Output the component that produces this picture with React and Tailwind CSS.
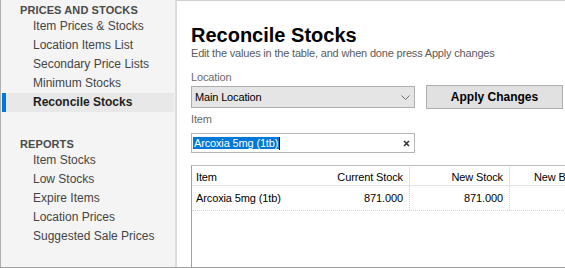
import React from "react";

const priceItems = [
  "Item Prices & Stocks",
  "Location Items List",
  "Secondary Price Lists",
  "Minimum Stocks",
  "Reconcile Stocks",
];
const reportItems = [
  "Item Stocks",
  "Low Stocks",
  "Expire Items",
  "Location Prices",
  "Suggested Sale Prices",
];

function NavItem({ label, active }) {
  return (
    <div
      className={
        "relative mx-[1px] h-[19px] leading-[19px] pl-[31px] whitespace-nowrap " +
        (active ? "bg-[#e8e8e8] font-bold text-[#1e1e1e]" : "text-[#444]")
      }
    >
      {active && <span className="absolute left-0 top-0 h-full w-[4px] bg-[#0078d7]" />}
      {label}
    </div>
  );
}

export default function App() {
  return (
    <div className="flex w-[565px] h-[268px] overflow-hidden border-b border-[#a0a0a0] font-['Liberation_Sans',Arial,sans-serif] bg-white">
      <aside className="w-[177px] shrink-0 bg-[#f4f4f4] border-l border-l-[#b0b0b0] border-r-2 border-r-[#dcdcdc] pt-[4px] text-[12px]">
        <div className="pl-[19px] h-[13px] leading-[13px] font-bold text-[11px] tracking-[0.1px] text-[#4a4a4a] whitespace-nowrap">
          PRICES AND STOCKS
        </div>
        {priceItems.map((l) => (
          <NavItem key={l} label={l} active={l === "Reconcile Stocks"} />
        ))}
        <div className="mt-[26px] pl-[19px] h-[13px] leading-[13px] font-bold text-[11px] tracking-[0.1px] text-[#4a4a4a]">
          REPORTS
        </div>
        {reportItems.map((l) => (
          <NavItem key={l} label={l} />
        ))}
      </aside>

      <main className="flex-1 min-w-0 flex flex-col bg-white border-t border-[#d0d0d0] pl-[14px] pt-[25px] overflow-hidden">
        <h1 className="text-[20px] leading-[18px] font-bold text-black whitespace-nowrap">Reconcile Stocks</h1>
        <p className="mt-[3px] text-[11px] leading-[13px] tracking-[-0.18px] text-[#5a5a5a] whitespace-nowrap">
          Edit the values in the table, and when done press Apply changes
        </p>

        <div className="mt-[11px] text-[11px] leading-[13px] tracking-[-0.15px] text-[#6a6a6a]">Location</div>
        <div className="mt-[1px] flex items-center h-[24px]">
          <div className="w-[224px] h-[22px] shrink-0 flex items-center justify-between border border-[#adadad] bg-[#e5e5e5] pl-[3px] pr-[4px] text-[11px] tracking-[-0.15px] text-black">
            <span>Main Location</span>
            <svg width="9" height="5" viewBox="0 0 9 5" className="mt-[1px]">
              <path d="M0.5 0.5 L4.5 4.5 L8.5 0.5" fill="none" stroke="#707070" strokeWidth="1" />
            </svg>
          </div>
          <div className="ml-[11px] w-[137px] h-[24px] shrink-0 flex items-center justify-center border border-[#adadad] bg-[#e1e1e1] text-[12px] font-bold text-black whitespace-nowrap">
            Apply Changes
          </div>
        </div>

        <div className="mt-[4px] text-[11px] leading-[13px] tracking-[-0.15px] text-[#6a6a6a]">Item</div>
        <div className="mt-[7px] w-[224px] h-[20px] shrink-0 flex items-center justify-between border border-[#b4b4b4] bg-white pl-[1px] pr-[4px]">
          <div className="flex items-center">
            <span className="bg-[#0078d7] text-white text-[11px] leading-[12px] tracking-[-0.15px] px-[1px] whitespace-nowrap">
              Arcoxia 5mg (1tb)
            </span>
            <span className="w-[1px] h-[13px] bg-black" />
          </div>
          <svg width="7" height="7" viewBox="0 0 7 7">
            <path d="M1 1 L6 6 M6 1 L1 6" stroke="#333" strokeWidth="1.6" />
          </svg>
        </div>

        <div className="mt-[12px] flex-1 border-l border-l-[#a0a0a0] border-t border-t-[#bcbcbc] overflow-hidden">
          <div className="w-max text-[11px] tracking-[-0.12px] text-black">
            <div className="flex h-[20px] leading-[20px] border-b border-[#e4e4e4] pt-[1px]">
              <div className="w-[117px] pl-[4px]">Item</div>
              <div className="w-[101px] pr-[6px] text-right border-r border-[#e2e2e2]">Current Stock</div>
              <div className="w-[100px] pr-[6px] text-right border-r border-[#e2e2e2]">New Stock</div>
              <div className="w-[100px] pl-[24px] whitespace-nowrap">New Batch</div>
            </div>
            <div className="flex h-[25px] leading-[24px] border-b border-dotted border-[#d4d4d4]">
              <div className="w-[117px] pl-[4px] whitespace-nowrap">Arcoxia 5mg (1tb)</div>
              <div className="w-[101px] pr-[6px] text-right border-r border-dotted border-[#d4d4d4]">871.000</div>
              <div className="w-[100px] pr-[6px] text-right border-r border-dotted border-[#d4d4d4]">871.000</div>
              <div className="w-[100px]"></div>
            </div>
          </div>
        </div>
      </main>
    </div>
  );
}
